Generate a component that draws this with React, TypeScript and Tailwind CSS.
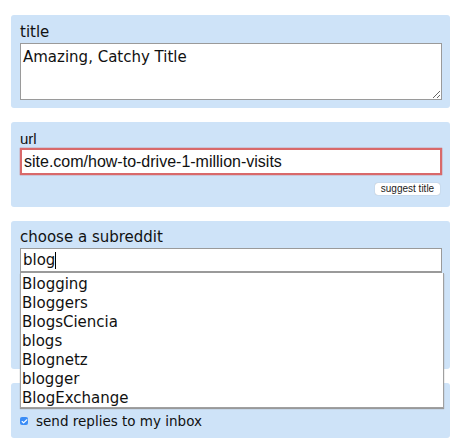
import { Check } from 'lucide-react'

const subreddits = ['Blogging', 'Bloggers', 'BlogsCiencia', 'blogs', 'Blognetz', 'blogger', 'BlogExchange']

export default function App() {
  return (
    <div className="w-[458px] h-[448px] bg-white pt-[15px] px-[11px] pr-[8px] flex flex-col gap-[14px] text-[#111] font-['DejaVu_Sans',sans-serif]">
      {/* title */}
      <div className="rounded-[3px] bg-[#cee3f8] px-[9px] pt-[6px] pb-[8px]">
        <div className="text-[15px] leading-[22px] h-[22px]">title</div>
        <textarea
          defaultValue="Amazing, Catchy Title"
          className="block w-[422px] h-[57px] border border-[#9a9a9a] bg-white px-[2px] pt-[3px] text-[15px] leading-[20px] outline-none resize-y"
        />
      </div>

      {/* url */}
      <div className="rounded-[3px] bg-[#cee3f8] px-[9px] pt-[7px] pb-[12px] flex flex-col">
        <div className="text-[15px] leading-[19px] h-[19px] font-['Liberation_Sans',sans-serif]">url</div>
        <input
          defaultValue="site.com/how-to-drive-1-million-visits"
          className="block w-[422px] h-[27px] border-2 border-[#d9696a] shadow-[0_0_1px_#b33] bg-white px-[2px] text-[16px] font-['Liberation_Sans',sans-serif] outline-none"
        />
        <div className="flex justify-end mt-[8px] pr-[1px]">
          <button className="h-[12px] w-[65px] rounded-[3px] bg-white shadow-[0_0_1px_#999] text-[10px] leading-[12px] text-[#222] font-['Liberation_Sans',sans-serif]">
            suggest title
          </button>
        </div>
      </div>

      {/* subreddit */}
      <div className="relative rounded-[3px] bg-[#cee3f8] px-[9px] pt-[5px] pb-[96px]">
        <div className="text-[15px] leading-[22px] h-[22px]">choose a subreddit</div>
        <div className="w-[422px] h-[25px] border border-[#9a9a9a] border-b-2 bg-white px-[2px] text-[15px] leading-[22px] flex items-center">
          blog<span className="inline-block w-[1px] h-[17px] bg-black" />
        </div>
        <div className="absolute z-10 left-[9px] top-[52px] w-[424px] h-[135px] bg-white border border-t-0 border-[#a0a0a0] shadow-[0_1px_1px_#999] pt-[2px] pl-[1px]">
          {subreddits.map((s) => (
            <div key={s} className="text-[15px] leading-[19px] h-[19px]">
              {s}
            </div>
          ))}
        </div>
      </div>

      {/* inbox */}
      <div className="rounded-[3px] bg-[#cee3f8] px-[9px] h-[55px] pb-[8px] flex items-end">
        <label className="flex items-center gap-[8px] text-[13.5px] leading-[18px]">
          <span className="w-[8px] h-[8px] rounded-[2px] bg-[#3b8df6] flex items-center justify-center">
            <Check size={7} strokeWidth={4} color="white" />
          </span>
          send replies to my inbox
        </label>
      </div>
    </div>
  )
}
